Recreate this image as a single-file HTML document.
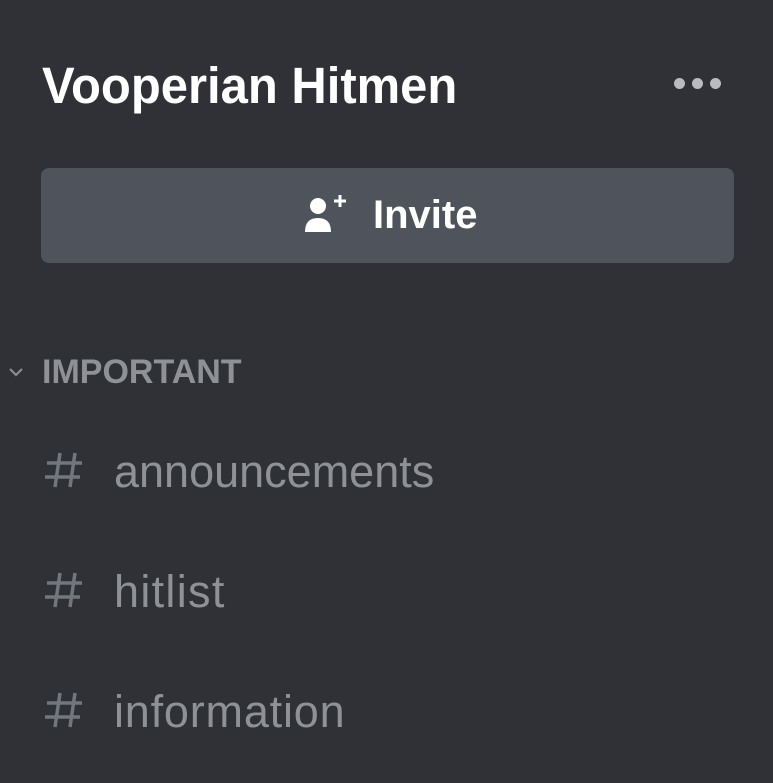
<!DOCTYPE html>
<html><head><meta charset="utf-8"><style>
html,body{margin:0;padding:0}
body{width:773px;height:783px;background:#2f3136;position:relative;overflow:hidden;font-family:"Liberation Sans",sans-serif}
.title{position:absolute;left:42px;top:56px;font-size:51px;font-weight:bold;color:#fff;transform:scaleX(0.96);transform-origin:left top;white-space:nowrap;line-height:60px}
.dot{position:absolute;top:78px;width:11px;height:11px;border-radius:50%;background:#b9bbbe}
.btn{position:absolute;left:41px;top:168px;width:693px;height:95px;border-radius:8px;background:#4f545c}
.inv{position:absolute;left:373px;top:191px;font-size:40px;font-weight:bold;color:#fff;line-height:48px}
.cat{position:absolute;left:42px;top:352px;font-size:34px;font-weight:bold;color:#8e9297;line-height:40px}
.ch{position:absolute;left:114px;font-size:45px;color:#8e9297;line-height:52px;white-space:nowrap}
.hash{position:absolute;left:44px}
</style></head><body>
<div class="title">Vooperian Hitmen</div>
<div class="dot" style="left:674px"></div><div class="dot" style="left:692px"></div><div class="dot" style="left:710px"></div>
<div class="btn"></div>
<svg style="position:absolute;left:303px;top:193px" width="46" height="40" viewBox="0 0 46 40">
<circle cx="15" cy="13" r="8" fill="#fff"/>
<path d="M2 39 Q2 25 15 25 Q28 25 28 39 Z" fill="#fff"/>
<path d="M37 2 V14 M31 8 H43" stroke="#fff" stroke-width="3"/>
</svg>
<div class="inv">Invite</div>
<svg style="position:absolute;left:8px;top:366px" width="16" height="12" viewBox="0 0 16 12"><path d="M2 3 L8 9 L14 3" stroke="#8e9297" stroke-width="2" fill="none"/></svg>
<div class="cat">IMPORTANT</div>
<svg class="hash" style="top:452px" width="40" height="36" viewBox="0 0 40 36"><path d="M16 1 L11 35 M31 1 L26 35 M3 11 H38 M1 25 H36" stroke="#72767d" stroke-width="3.5" fill="none"/></svg>
<div class="ch" style="top:446px">announcements</div>
<svg class="hash" style="top:572px" width="40" height="36" viewBox="0 0 40 36"><path d="M16 1 L11 35 M31 1 L26 35 M3 11 H38 M1 25 H36" stroke="#72767d" stroke-width="3.5" fill="none"/></svg>
<div class="ch" style="top:566px;letter-spacing:1.3px">hitlist</div>
<svg class="hash" style="top:692px" width="40" height="36" viewBox="0 0 40 36"><path d="M16 1 L11 35 M31 1 L26 35 M3 11 H38 M1 25 H36" stroke="#72767d" stroke-width="3.5" fill="none"/></svg>
<div class="ch" style="top:686px;letter-spacing:0.8px">information</div>
</body></html>
